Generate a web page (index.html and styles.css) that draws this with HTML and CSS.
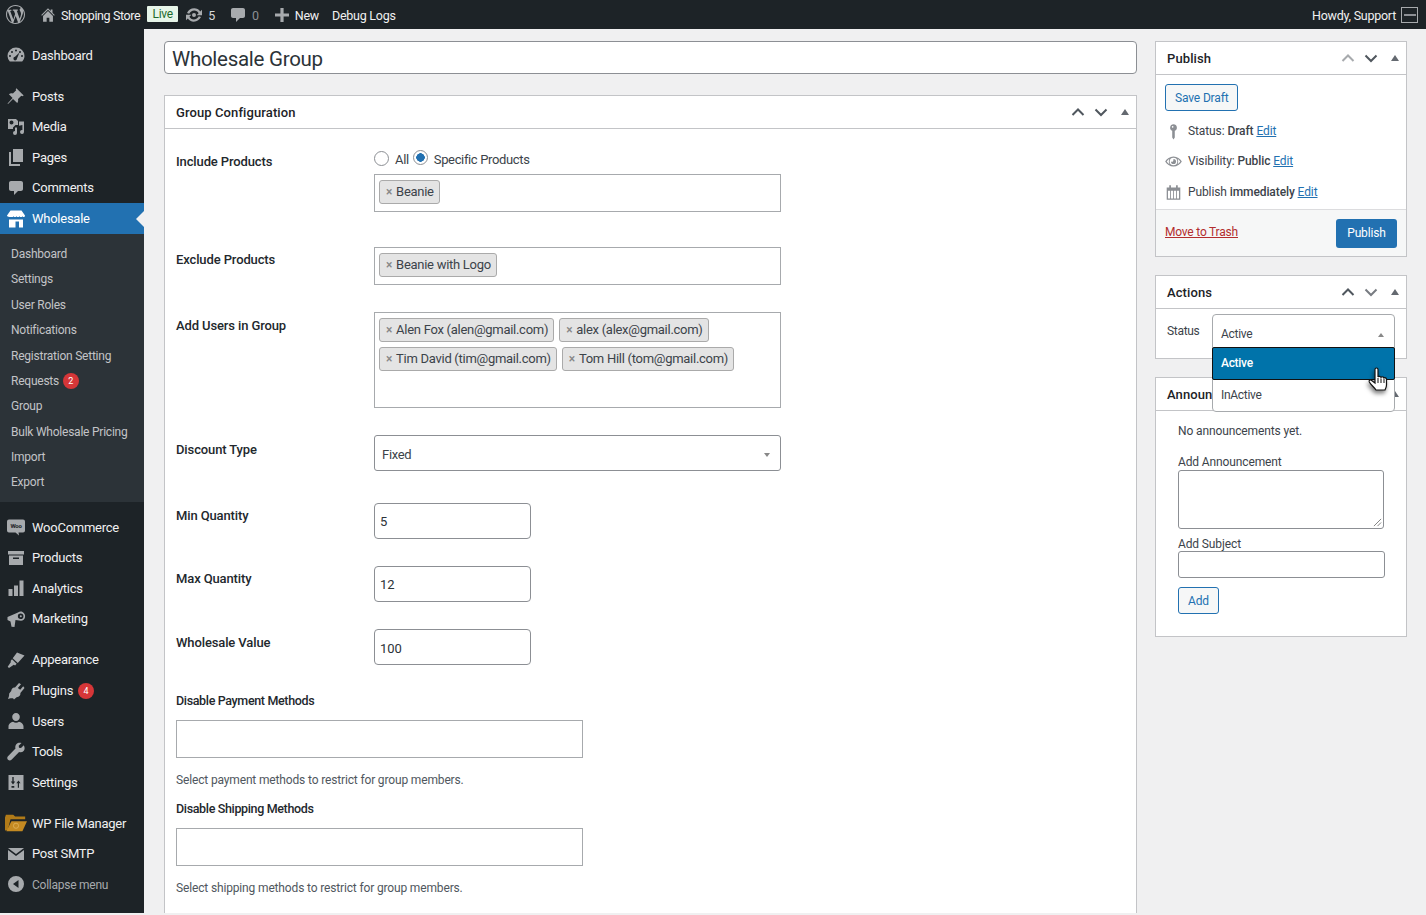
FILE: index.html
```html
<!DOCTYPE html>
<html lang="en">
<head>
<meta charset="utf-8">
<title>Wholesale Group</title>
<link rel="stylesheet" href="styles.css">
</head>
<body>
<header class="adminbar">
  <div class="ab-left">
    <svg class="ab-wp" viewBox="0 0 20 20"><path d="M20 10c0-5.510-4.490-10-10-10C4.480 0 0 4.490 0 10c0 5.520 4.480 10 10 10 5.510 0 10-4.480 10-10zM7.780 15.370L4.370 6.220c.55-.02 1.170-.08 1.170-.08.5-.06.44-1.130-.06-1.110 0 0-1.450.11-2.370.11-.18 0-.37 0-.58-.01C4.120 2.690 6.910 1.110 10 1.110c2.300 0 4.390.87 5.970 2.300-.66-.11-1.600.38-1.600 1.540 0 .72.43 1.320.89 2.060.35.61.55 1.360.55 2.460 0 1.490-1.400 5-1.400 5l-3.030-8.370c.54-.02.82-.17.82-.17.5-.05.44-1.250-.06-1.220 0 0-1.440.12-2.380.12-.87 0-2.330-.12-2.330-.12-.5-.03-.56 1.200-.06 1.220l.92.080 1.260 3.410zM17.410 10c.24-.64.74-1.870.43-4.250.7 1.290 1.050 2.710 1.050 4.250 0 3.290-1.730 6.240-4.400 7.780.97-2.590 1.940-5.200 2.920-7.780zM6.100 18.090C3.120 16.650 1.110 13.530 1.110 10c0-1.300.23-2.480.72-3.590C3.250 10.300 4.670 14.200 6.100 18.090zm4.030-6.630l2.580 6.980c-.86.290-1.760.45-2.710.45-.79 0-1.570-.11-2.290-.33.810-2.380 1.620-4.740 2.420-7.100z"/></svg>
    <svg class="ab-ico ab-home" viewBox="0 0 20 20"><path d="M16 8.500l1.500 1.500-.8.8L10 4.200 3.300 10.800l-.8-.8L10 2.500l3 3V4h2v3.500zM4.500 11L10 5.500l5.500 5.500v6.500h-4V13h-3v4.500h-4z"/></svg>
    <span class="ab-text ab-site">Shopping Store</span>
    <span class="ab-live">Live</span>
    <svg class="ab-ico ab-update" viewBox="0 0 20 20"><path d="M10.200 3.300c2.500 0 4.700 1.200 6 3.200L18 4.800v5.400h-5.400l2-2C13.800 6.600 12.100 5.500 10.200 5.500c-2.200 0-4.100 1.400-5 3.300L3 7.900C4.200 5.200 7 3.300 10.200 3.300zM10 8a2 2 0 1 1 0 4 2 2 0 0 1 0-4zM2 9.800h5.400l-2 2c.8 1.600 2.500 2.700 4.400 2.700 2.200 0 4.100-1.400 5-3.300l2.200.9c-1.200 2.700-4 4.600-7.200 4.600-2.500 0-4.700-1.200-6-3.200L2 15.200z"/></svg>
    <span class="ab-text ab-count">5</span>
    <svg class="ab-ico ab-comment" viewBox="0 0 20 20"><path d="M5 3h10c1.100 0 2 .9 2 2v6c0 1.100-.9 2-2 2h-3l-4 4v-4H5c-1.100 0-2-.9-2-2V5c0-1.100.9-2 2-2z"/></svg>
    <span class="ab-text ab-zero">0</span>
    <svg class="ab-ico ab-plus" viewBox="0 0 20 20"><path d="M8.400 3h3.200v5.400H17v3.200h-5.400V17H8.400v-5.400H3V8.400h5.400z"/></svg>
    <span class="ab-text">New</span>
    <span class="ab-text ab-debug">Debug Logs</span>
  </div>
  <div class="ab-right">
    <span class="ab-text">Howdy, Support</span>
    <span class="ab-avatar"><i></i></span>
  </div>
</header>

<div class="layout">
  <nav class="sidebar">
    <ul class="menu menu-first">
      <li><svg viewBox="0 0 20 20"><path d="M3.800 16.500A8.400 8.400 0 0 1 1.500 11a8.500 8.500 0 0 1 17 0c0 2.100-.9 4-2.300 5.500zM10 4.500a1 1 0 1 0 0 2 1 1 0 0 0 0-2zM6 6a1 1 0 1 0 0 2 1 1 0 0 0 0-2zm8 0a1 1 0 1 0 0 2 1 1 0 0 0 0-2zM4 10a1 1 0 1 0 0 2 1 1 0 0 0 0-2zm12 0a1 1 0 1 0 0 2 1 1 0 0 0 0-2zm-2.500-2.500L9 11.800a1.800 1.800 0 1 0 2 1.700z" fill-rule="evenodd"/></svg><span>Dashboard</span></li>
    </ul>
    <ul class="menu">
      <li><svg viewBox="0 0 20 20"><path d="M10.400 2.300l7.300 7.300-1.400.7-1-.5-3.300 3.300c.4 1.600.1 3-.8 4L7 12.900l-4.700 4.800-.7.200.2-.7L6.600 12 2.900 8.300c1-.9 2.400-1.200 4-.8l3.300-3.300-.5-1z"/></svg><span>Posts</span></li>
      <li><svg viewBox="0 0 20 20"><path d="M2 2h8l2 2v4H9.500L7 10.500V12H2zm3.500 1.500a2 2 0 1 0 0 4 2 2 0 0 0 0-4zM13 4.500h5V15a2 2 0 1 1-1.600-2V8l-3.400.8zM9 10.500h2V16a2 2 0 1 1-2-2z"/></svg><span>Media</span></li>
      <li><svg viewBox="0 0 20 20"><path d="M7 2h10v13H7zM5 5v12h9v2H3V5z"/></svg><span>Pages</span></li>
      <li><svg viewBox="0 0 20 20"><path d="M5 3h10c1.100 0 2 .9 2 2v6c0 1.100-.9 2-2 2h-3l-4 4v-4H5c-1.100 0-2-.9-2-2V5c0-1.100.9-2 2-2z"/></svg><span>Comments</span></li>
      <li class="current"><svg viewBox="0 0 20 20"><path d="M4.500 1.500h11l3.500 5c0 .8-.4 1.600-1.100 1.600-.6 0-1-.4-1.400-.9-.4.500-.9.900-1.500.9s-1.100-.4-1.500-.9c-.4.500-.9.900-1.500.9s-1.100-.4-1.500-.9c-.4.500-.9.900-1.500.9s-1.100-.4-1.500-.9c-.4.500-.8.900-1.400.9C1.400 8.100 1 7.300 1 6.500zM3 10.500h14V18.500h-4v-6H9.500v6H3z"/></svg><span>Wholesale</span></li>
    </ul>
    <ul class="submenu">
      <li>Dashboard</li>
      <li>Settings</li>
      <li>User Roles</li>
      <li>Notifications</li>
      <li>Registration Setting</li>
      <li>Requests <b class="badge">2</b></li>
      <li>Group</li>
      <li>Bulk Wholesale Pricing</li>
      <li>Import</li>
      <li>Export</li>
    </ul>
    <ul class="menu menu-woo">
      <li><svg viewBox="0 0 20 20"><path d="M3 2.500h14a2 2 0 0 1 2 2v9a2 2 0 0 1-2 2h-4.500l.5 3-3.500-3H3a2 2 0 0 1-2-2v-9a2 2 0 0 1 2-2z"/><text x="10" y="11" class="woo-t">Woo</text></svg><span>WooCommerce</span></li>
      <li><svg viewBox="0 0 20 20"><path d="M2 3h16v3.500H2zM3 7.500h14V17H3zm4 2v1.500h6V9.500z" fill-rule="evenodd"/></svg><span>Products</span></li>
      <li><svg viewBox="0 0 20 20"><path d="M2.500 11h4v7h-4zM8 7.500h4V18H8zM13.500 2.500h4V18h-4z"/></svg><span>Analytics</span></li>
      <li><svg viewBox="0 0 20 20"><path d="M1.500 8L12 3.500c1.500-1 3-1.200 4.500-.5 2 1 3 3 2.500 5.200-.4 2-2 3.400-4 3.500l-5.500-.7L8.500 18l-3-.2-1-5.300-3-1.500zM14.600 4.500a2.800 2.800 0 1 0 .1 5.600 2.800 2.800 0 0 0-.1-5.600zm.2 1.800a1 1 0 1 1 0 2 1 1 0 0 1 0-2z" fill-rule="evenodd"/></svg><span>Marketing</span></li>
    </ul>
    <ul class="menu">
      <li><svg viewBox="0 0 20 20"><path d="M11 2.500l7.500 3-6.700 7.500-5.100-4.800zM6 9.300l4.700 4.500-1.600 1.700-1.300-.7-4.800 3.300-1.300-1.300 3.200-4.900-.3-1z"/></svg><span>Appearance</span></li>
      <li class="plugins"><svg viewBox="0 0 20 20"><path d="M13 2l2 1.300L11.800 7l2.400 1.800L17.200 5.300 18.500 7 14.400 12c.3 2-1 3.700-3.800 4.300L8 18.500 7 17.200H4.500L2 18l1-3 .2-2.500 2-2.500C5.600 7.500 7 6 9 6.500z"/></svg><span>Plugins</span><b class="badge">4</b></li>
      <li><svg viewBox="0 0 20 20"><path d="M10 2a3.800 3.800 0 0 1 3.800 4c0 2.200-1.600 4-3.800 4S6.200 8.200 6.200 6A3.800 3.800 0 0 1 10 2zM2.500 15.500c0-2.500 2.500-4.500 4.500-4.700 1 .7 2 1 3 1s2-.3 3-1c2 .2 4.500 2.200 4.500 4.700v2.500h-15z"/></svg><span>Users</span></li>
      <li><svg viewBox="0 0 20 20"><path d="M17.800 3.200L15 6l-2-.2-.3-2L15.500 1c-2-.6-3.900-.2-5 1-1.200 1.300-1.500 3-1 4.600L2 14.200c-1 1-1 2.500 0 3.500s2.500 1 3.500 0l7.600-7.700c1.600.5 3.300.2 4.500-1 1.200-1.200 1.500-3.500.2-5.800z"/></svg><span>Tools</span></li>
      <li><svg viewBox="0 0 20 20"><path d="M2.500 3h15v15h-15zM6.300 5v4.500H4.800L7 12.500l2.200-3H7.700V5zM13 15.800v-4.500h1.500L12.500 8.500l-2.200 2.800h1.500v4.500zM5.500 14v1.800h2.800V14z" fill-rule="evenodd"/></svg><span>Settings</span></li>
    </ul>
    <ul class="menu">
      <li class="fm"><svg viewBox="0 0 24 20"><path d="M0 4l1-3h8l2 2h11v3H6L3 18l-3 .3z" fill="#b07a18"/><path d="M7 8h17l-5 11H1.500z" fill="#c48a22"/><circle cx="12" cy="13" r="2.800" fill="none" stroke="#dcae58" stroke-width="1"/></svg><span>WP File Manager</span></li>
      <li><svg viewBox="0 0 20 20"><path d="M2 4h16L10 10zM2 6l8 6 8-6v10H2z"/></svg><span>Post SMTP</span></li>
      <li class="collapse"><svg viewBox="0 0 20 20"><path d="M10 2a8 8 0 1 1 0 16 8 8 0 0 1 0-16zm2.500 4L7 10l5.500 4z" fill-rule="evenodd"/></svg><span>Collapse menu</span></li>
    </ul>
  </nav>

  <main class="content">
    <div class="primary">
      <div class="title-input">Wholesale Group</div>
      <section class="box config">
        <header class="box-head">
          <h2>Group Configuration</h2>
          <div class="handles">
            <svg viewBox="0 0 14 14" class="chev"><path d="M1.500 10L7 4.500 12.500 10"/></svg>
            <svg viewBox="0 0 14 14" class="chev"><path d="M1.500 4.500L7 10l5.500-5.500"/></svg>
            <i class="tri-up"></i>
          </div>
        </header>
        <div class="form">
          <div class="row row-include">
            <label class="lbl">Include Products</label>
            <div>
              <div class="radios">
                <i class="radio"></i><span class="r-all">All</span><i class="radio on"></i><span class="r-spec">Specific Products</span>
              </div>
              <div class="multi"><span class="tag"><s>×</s>Beanie</span></div>
            </div>
          </div>
          <div class="row row-exclude">
            <label class="lbl">Exclude Products</label>
            <div class="multi"><span class="tag"><s>×</s>Beanie with Logo</span></div>
          </div>
          <div class="row row-users">
            <label class="lbl">Add Users in Group</label>
            <div class="multi multi-tall">
              <span class="tag"><s>×</s>Alen Fox (alen@gmail.com)</span>
              <span class="tag"><s>×</s>alex (alex@gmail.com)</span>
              <span class="tag"><s>×</s>Tim David (tim@gmail.com)</span>
              <span class="tag"><s>×</s>Tom Hill (tom@gmail.com)</span>
            </div>
          </div>
          <div class="row row-disc">
            <label class="lbl">Discount Type</label>
            <div class="single">Fixed<i class="tri-down"></i></div>
          </div>
          <div class="row row-num">
            <label class="lbl">Min Quantity</label>
            <div class="num">5</div>
          </div>
          <div class="row row-num">
            <label class="lbl">Max Quantity</label>
            <div class="num">12</div>
          </div>
          <div class="row row-num row-value">
            <label class="lbl">Wholesale Value</label>
            <div class="num">100</div>
          </div>
          <div class="stack">
            <label class="lbl">Disable Payment Methods</label>
            <div class="multi wide"></div>
            <p class="help">Select payment methods to restrict for group members.</p>
          </div>
          <div class="stack stack-2">
            <label class="lbl">Disable Shipping Methods</label>
            <div class="multi wide"></div>
            <p class="help">Select shipping methods to restrict for group members.</p>
          </div>
        </div>
      </section>
    </div>

    <aside class="side">
      <section class="box publish">
        <header class="box-head side-head">
          <h2>Publish</h2>
          <div class="handles">
            <svg viewBox="0 0 14 14" class="chev dim"><path d="M1.500 10L7 4.500 12.500 10"/></svg>
            <svg viewBox="0 0 14 14" class="chev"><path d="M1.500 4.500L7 10l5.500-5.500"/></svg>
            <i class="tri-up"></i>
          </div>
        </header>
        <div class="pub-body">
          <span class="btn-outline">Save Draft</span>
          <div class="pub-line pl-1"><svg viewBox="0 0 20 20"><path d="M10 1.500a4 4 0 0 1 1.500 7.700V17l-1.500 2.500L8.500 17V9.200A4 4 0 0 1 10 1.500zM9 3.500a1 1 0 1 0 0 2 1 1 0 0 0 0-2z" fill-rule="evenodd"/></svg><span>Status: <b>Draft</b> <a>Edit</a></span></div>
          <div class="pub-line pl-2"><svg viewBox="0 0 20 20"><path d="M10 4c4.300 0 7.800 2.700 9.800 6-2 3.300-5.500 6-9.800 6S2.200 13.300.2 10C2.200 6.700 5.700 4 10 4zm0 1.500a4.500 4.500 0 1 0 0 9 4.500 4.500 0 0 0 0-9zM10 7a3 3 0 1 1-3 3c.8.6 2 .5 2.500-.2S9.800 7.800 10 7zM2 10c.9 1.300 2 2.400 3.200 3.100A6 6 0 0 1 4.500 10c0-1.100.2-2.200.7-3.100C4 7.600 2.900 8.700 2 10zm16 0c-.9-1.300-2-2.400-3.200-3.100.5.900.7 2 .7 3.100s-.2 2.200-.7 3.100c1.200-.7 2.300-1.800 3.200-3.100z" fill-rule="evenodd"/></svg><span>Visibility: <b>Public</b> <a>Edit</a></span></div>
          <div class="pub-line pl-3"><svg viewBox="0 0 20 20"><path d="M5 1.500h2V4h6V1.500h2V4h3v14.500H2V4h3zM3.500 8v9h2.500V8zm3.500 0v9h2.500V8zm3.500 0v9h2.500V8zm3.500 0v9h2.500V8z" fill-rule="evenodd"/></svg><span>Publish <b>immediately</b> <a>Edit</a></span></div>
        </div>
        <footer class="pub-foot">
          <a class="trash">Move to Trash</a>
          <span class="btn-primary">Publish</span>
        </footer>
      </section>

      <section class="box actions">
        <header class="box-head side-head">
          <h2>Actions</h2>
          <div class="handles">
            <svg viewBox="0 0 14 14" class="chev"><path d="M1.500 10L7 4.500 12.500 10"/></svg>
            <svg viewBox="0 0 14 14" class="chev dim2"><path d="M1.500 4.500L7 10l5.500-5.500"/></svg>
            <i class="tri-up"></i>
          </div>
        </header>
        <div class="act-body">
          <span class="status-lbl">Status</span>
        </div>
        <div class="dropdown">
          <div class="dd-head">Active<i class="tri-up small"></i></div>
          <div class="dd-opt sel">Active</div>
          <div class="dd-opt dd-last">InActive</div>
          <svg class="hand" viewBox="0 0 20 26"><path d="M7 2.500c0-2 3-2 3 0V10c.5-1 2.500-1 3 .3.700-.9 2.500-.7 3 .7.900-.6 2.500-.2 2.500 1.500V18c0 2-.8 3.500-1.500 5H8C6 20 3 18 1.300 15c-.7-1.500.8-2.700 2-1.800L7 16z" fill="#fff" stroke="#111" stroke-width="1.200"/><path d="M10 11v5M13 11.500v4.500M16 12v4" stroke="#111" stroke-width="1" fill="none"/></svg>
        </div>
      </section>

      <section class="box announce">
        <header class="box-head side-head">
          <h2 class="ann-title">Announ</h2>
          <div class="handles"><i class="tri-up"></i></div>
        </header>
        <div class="ann-body">
          <p class="ann-none">No announcements yet.</p>
          <label class="ann-lbl">Add Announcement</label>
          <div class="ann-area"><svg viewBox="0 0 10 10" class="grip"><path d="M9 1L1 9M9 5L5 9"/></svg></div>
          <label class="ann-lbl ann-lbl2">Add Subject</label>
          <div class="ann-input"></div>
          <span class="btn-outline btn-add">Add</span>
        </div>
      </section>
    </aside>
  </main>
</div>
</body>
</html>
```
FILE: styles.css
```css
* { box-sizing: border-box; }
html, body { margin: 0; padding: 0; }
body {
  width: 1426px;
  height: 915px;
  overflow: hidden;
  background: #f0f0f1;
  font: 13px/1.4 Roboto, "Open Sans", sans-serif;
  color: #3c434a;
}
ul { list-style: none; margin: 0; padding: 0; }
svg { display: block; flex: none; }
h2, p { margin: 0; }

/* admin bar */
.adminbar {
  height: 29px;
  background: #1d2327;
  color: #f0f0f1;
  display: flex;
  justify-content: space-between;
  align-items: center;
  padding: 0 8px 0 6px;
  font-size: 12.500px;
  letter-spacing: -.25px;
}
.ab-left, .ab-right { display: flex; align-items: center; }
.ab-wp { width: 19px; height: 19px; fill: #a7aaad; margin-right: 14px; }
.ab-ico { width: 20px; height: 20px; fill: #a7aaad; }
.ab-text { white-space: nowrap; padding-top: 2px; }
.ab-site { letter-spacing: -.4px; }
.ab-home { width: 18px; height: 18px; margin-right: 4px; }
.ab-live { background: #e7f5e9; color: #1e6b2c; height: 16px; line-height: 16px; width: 31px; text-align: center; border-radius: 1px; margin: 0 6px 1px 7px; font-size: 12px; }
.ab-count { margin-left: 4px; margin-right: 13px; color: #d7d8d9; }
.ab-zero { color: #8c8f94; margin-left: 4px; margin-right: 13px; }
.ab-plus { margin-right: 3px; }
.ab-debug { margin-left: 13px; }
.ab-avatar { width: 17px; height: 16px; border: 1px solid #a7aaad; margin-left: 5px; display: flex; align-items: center; justify-content: flex-start; background: #1d2327; padding-left: 2px; }
.ab-avatar i { width: 12px; height: 2px; background: #8c8f94; }

/* layout */
.layout { display: flex; height: 884px; }
.sidebar { width: 144px; flex: none; background: #1d2327; padding-top: 11px; color: #f0f0f1; }
.menu { margin-bottom: 10.400px; letter-spacing: -.25px; }
.menu li { height: 30.600px; display: flex; align-items: center; padding-left: 6px; white-space: nowrap; }
.menu li span { padding-top: 1px; }
.menu li svg { width: 20px; height: 20px; fill: #a7aaad; margin-right: 6px; margin-left: 0; }
.menu li.current { background: #2271b1; color: #fff; position: relative; margin-bottom: 0; }
.menu li.current svg { fill: #fff; }
.menu li.current::after { content: ""; position: absolute; right: 0; top: 8px; border: 8px solid transparent; border-left-width: 0; border-right-color: #f0f0f1; }
.menu:has(.current) { margin-bottom: 0; }
.menu-woo li svg { overflow: visible; }
.woo-t { font-size: 6px; font-weight: 700; fill: #1d2327; text-anchor: middle; }
.badge { display: inline-block; width: 16px; height: 16px; line-height: 16px; border-radius: 50%; background: #d63638; color: #fff; font-size: 9px; font-weight: 400; text-align: center; letter-spacing: 0; }
.plugins .badge { margin-left: 5px; }
.submenu { background: #2c3338; padding: 8px 0 6px; margin-bottom: 10px; color: #c3c4c7; font-size: 12px; letter-spacing: -.23px; }
.submenu li { height: 25.400px; line-height: 25px; padding-left: 11px; white-space: nowrap; }
.submenu .badge { margin-left: 1px; vertical-align: 1px; }
.fm svg { margin-left: -1px !important; width: 22px !important; margin-right: 5px !important; }
.collapse { color: #a7aaad; font-size: 12px; }

/* content */
.content { flex: 1; display: flex; align-items: flex-start; gap: 18px; padding: 12px 19px 0 20px; min-width: 0; height: 884px; overflow: hidden; }
.primary { width: 973px; flex: none; }
.side { width: 252px; flex: none; }
.title-input { height: 33px; background: #fff; border: 1px solid #8c8f94; border-radius: 4px; font-size: 20.500px; line-height: 35px; padding-left: 7px; color: #2c3338; margin-bottom: 21px; letter-spacing: -.27px; }
.box { background: #fff; border: 1px solid #c3c4c7; }
.box-head { height: 33px; border-bottom: 1px solid #c3c4c7; display: flex; align-items: center; justify-content: space-between; padding: 0 7px 0 11px; }
.box-head h2 { font-size: 13px; font-weight: 500; color: #1d2327; white-space: nowrap; padding-top: 2px; letter-spacing: .1px; }
.handles { display: flex; align-items: center; gap: 9px; }
.chev { width: 14px; height: 14px; fill: none; stroke: #50575e; stroke-width: 2; }
.chev.dim { stroke: #a7aaad; }
.chev.dim2 { stroke: #787c82; }
.tri-up { display: block; width: 0; height: 0; border: 4px solid transparent; border-top-width: 0; border-bottom: 6px solid #646970; margin-left: 4px; }
.tri-up.small { border-width: 0 3px 4px; border-color: transparent transparent #888; margin: 0; }
.tri-down { display: block; width: 0; height: 0; border-style: solid; border-width: 4px 3px 0; border-color: #888 transparent transparent; }

/* form */
.config { height: 830px; }
.form { padding: 0 11px; }
.lbl { font-weight: 500; color: #23282d; font-size: 13px; display: block; letter-spacing: -.12px; }
.row { display: grid; grid-template-columns: 198px 407px; align-items: start; }
.row-include { padding-top: 18px; height: 118px; }
.row-include .lbl { padding-top: 6px; }
.radios { display: flex; align-items: center; height: 25px; margin-bottom: 2px; letter-spacing: -.35px; }
.radio { display: block; width: 15px; height: 15px; border: 1px solid #8c8f94; border-radius: 50%; background: #fff; margin-bottom: 3px; flex: none; position: relative; }
.radio.on { border-color: #8c8f94; background: radial-gradient(circle, #2271b1 0 4px, #fff 4.500px); margin-bottom: 4px; margin-left: 4px; }
.r-all { margin-left: 6px; padding-top: 2px; }
.r-spec { margin-left: 6px; padding-top: 2px; }
.multi { border: 1px solid #a7aaad; background: #fff; min-height: 38px; padding: 5px 4px; display: flex; flex-wrap: wrap; align-content: flex-start; gap: 5px; }
.multi-tall { height: 96px; }
.multi.wide { width: 407px; }
.tag { display: inline-flex; align-items: center; height: 24px; border: 1px solid #aaa; border-radius: 3px; background: #e4e4e4; padding: 1px 5px 0 6px; white-space: nowrap; color: #3c434a; letter-spacing: -.28px; }
.tag s { text-decoration: none; color: #888; margin-right: 4px; font-weight: 500; font-size: 12px; }
.row-exclude { height: 65px; }
.row-exclude .lbl { padding-top: 4px; }
.row-users { height: 123px; }
.row-users .lbl { padding-top: 5px; }
.row-disc { height: 68px; }
.row-disc .lbl { padding-top: 6px; }
.single { height: 36px; border: 1px solid #8c8f94; border-radius: 3px; background: #fff; display: flex; align-items: center; justify-content: space-between; padding: 4px 10px 0 7px; letter-spacing: -.3px; }
.row-num { height: 63px; }
.row-num .lbl { padding-top: 4px; }
.row-value .lbl { padding-top: 5px; }
.num { width: 157px; height: 36px; border: 1px solid #8c8f94; border-radius: 4px; background: #fff; display: flex; align-items: center; padding: 3px 5px 0; color: #2c3338; }
.row-value .num { padding-top: 5px; }
.stack .lbl { font-size: 12.500px; margin-bottom: 10px; letter-spacing: -.35px; }
.stack { margin-top: 0; }
.stack-2 { margin-top: 12px; }
.help { font-size: 12px; color: #50575e; margin-top: 14px; letter-spacing: -.15px; }

/* side boxes */
.publish { height: 216px; display: flex; flex-direction: column; }
.pub-body { flex: 1; padding: 9px 9px 0; }
.btn-outline { display: inline-block; height: 27px; line-height: 26px; border: 1px solid #2271b1; border-radius: 3px; background: #f6f7f7; color: #2271b1; font-size: 12px; padding: 0 9px; letter-spacing: -.15px; }
.pub-line { display: flex; align-items: center; height: 30.500px; gap: 6px; white-space: nowrap; font-size: 12px; letter-spacing: -.1px; }
.pub-line svg { width: 17px; height: 17px; fill: #8c8f94; }
.pub-line b { font-weight: 500; }
.pub-line a { color: #2271b1; text-decoration: underline; }
.pl-1 { margin-top: 5px; }
.pub-foot { height: 47px; background: #f6f7f7; border-top: 1px solid #dcdcde; display: flex; align-items: center; justify-content: space-between; padding: 0 9px; }
.trash { color: #b32d2e; text-decoration: underline; font-size: 12px; letter-spacing: -.2px; margin-bottom: 2px; }
.btn-primary { background: #2271b1; color: #fff; border-radius: 3px; height: 29px; line-height: 29px; width: 61px; text-align: center; font-size: 12px; letter-spacing: -.15px; }
.actions { height: 84px; margin-top: 18px; position: relative; z-index: 2; }
.act-body { padding: 14px 11px 0; font-size: 12px; letter-spacing: -.3px; }
.dropdown { position: absolute; left: 56px; top: 38px; width: 183px; height: 98px; border: 1px solid #a7aaad; border-radius: 4px; background: #fff; font-size: 12px; letter-spacing: -.3px; z-index: 3; }
.dd-head { height: 32px; display: flex; align-items: center; justify-content: space-between; padding: 7px 10px 0 8px; }
.dd-opt { height: 32px; display: flex; align-items: center; padding-left: 8px; }
.dd-last { padding-bottom: 2px; }
.dd-opt.sel { background: #0073aa; color: #fff; font-weight: 500; border: 1px solid #111; margin: 0 -1px; padding-left: 8px; border-radius: 2px; height: 33px; }
.hand { position: absolute; left: 155px; top: 52px; width: 20px; height: 26px; filter: drop-shadow(-1px 3px 2px rgba(0,0,0,.5)); }
.announce { height: 260px; margin-top: 18px; }
.ann-body { padding: 11px 22px; font-size: 12px; letter-spacing: -.12px; }
.ann-none { margin-bottom: 14px; padding-top: 1px; }
.ann-lbl { display: block; line-height: 16px; }
.ann-area { width: 206px; height: 59px; border: 1px solid #8c8f94; border-radius: 3px; position: relative; }
.grip { position: absolute; right: 1px; bottom: 1px; width: 9px; height: 9px; stroke: #777; fill: none; }
.ann-lbl2 { margin-top: 9px; line-height: 13px; }
.ann-input { width: 207px; height: 27px; border: 1px solid #8c8f94; border-radius: 3px; }
.btn-add { margin-top: 9px; padding: 0 9px; height: 27px; }
```
